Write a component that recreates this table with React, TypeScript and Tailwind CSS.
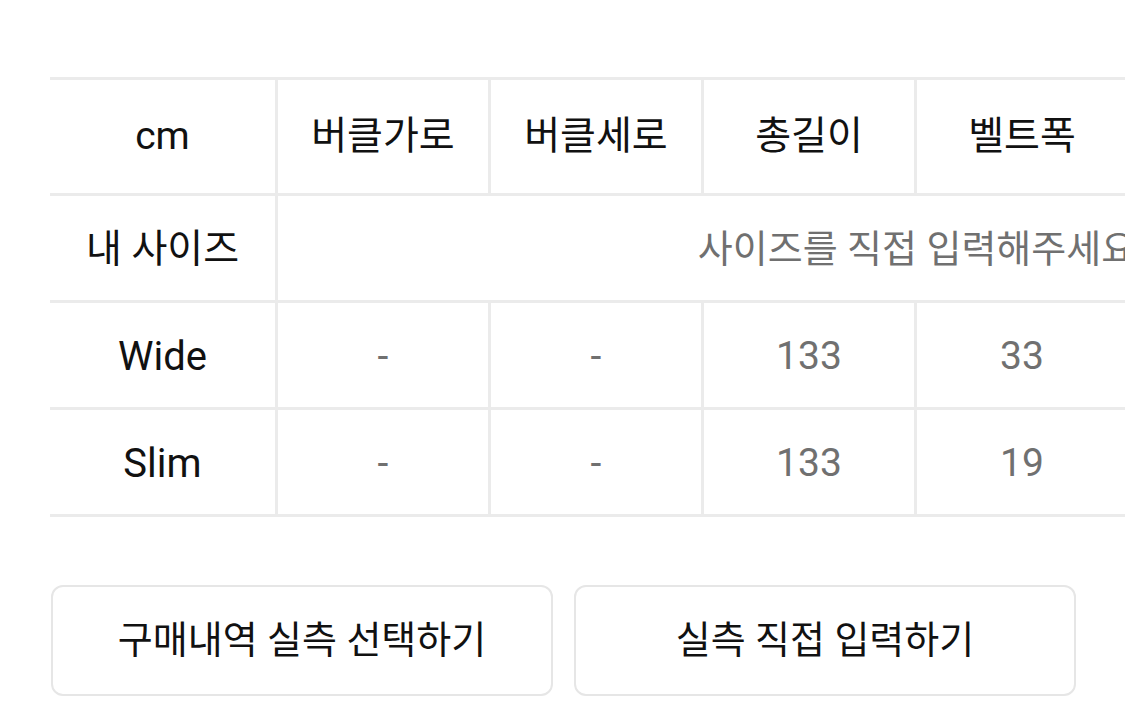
const FONT = "font-['Roboto','Noto_Sans_CJK_KR',sans-serif]";

const headers = ['버클가로', '버클세로', '총길이', '벨트폭', '벨트길이', '구멍간격'];

const rows = [
  { name: 'Wide', values: ['-', '-', '133', '33', '-', '-'] },
  { name: 'Slim', values: ['-', '-', '133', '19', '-', '-'] },
];

export default function App() {
  return (
    <div className={`w-[1125px] h-[711px] overflow-hidden bg-white ${FONT}`}>
      <div className="pl-[50px] pt-[77px]">
        <div className="w-[1506px] border-t-[3px] border-[#ebebeb]">
          <div className="grid grid-cols-[228px_repeat(6,213px)] h-[116px] border-b-[3px] border-[#ebebeb]">
            <div className="flex items-center justify-center border-r-[3px] border-[#ebebeb] text-[39px] text-[#111]">cm</div>
            {headers.map((h) => (
              <div key={h} className="flex items-center justify-center border-r-[3px] border-[#ebebeb] text-[39px] text-[#111]">
                {h}
              </div>
            ))}
          </div>
          <div className="grid grid-cols-[228px_1fr] h-[107px] border-b-[3px] border-[#ebebeb]">
            <div className="flex items-center justify-center pt-[3px] border-r-[3px] border-[#ebebeb] text-[39px] text-[#111]">내 사이즈</div>
            <div className="flex items-center justify-center pt-[3px] text-[38px] text-[#707070] whitespace-nowrap">사이즈를 직접 입력해주세요</div>
          </div>
          {rows.map((r) => (
            <div key={r.name} className="grid grid-cols-[228px_repeat(6,213px)] h-[107px] border-b-[3px] border-[#ebebeb]">
              <div className="flex items-center justify-center pt-[3px] border-r-[3px] border-[#ebebeb] text-[40px] text-[#111]">{r.name}</div>
              {r.values.map((v, i) => (
                <div key={i} className="flex items-center justify-center pt-[3px] border-r-[3px] border-[#ebebeb] text-[39px] text-[#707070]">
                  {v}
                </div>
              ))}
            </div>
          ))}
        </div>
      </div>
      <div className="flex gap-[21px] pl-[51px] mt-[68px]">
        <button className="w-[502px] h-[111px] rounded-[12px] border-2 border-[#e6e6e6] bg-white text-[38px] text-[#111]">
          구매내역 실측 선택하기
        </button>
        <button className="w-[502px] h-[111px] rounded-[12px] border-2 border-[#e6e6e6] bg-white text-[38px] text-[#111]">
          실측 직접 입력하기
        </button>
      </div>
    </div>
  );
}
